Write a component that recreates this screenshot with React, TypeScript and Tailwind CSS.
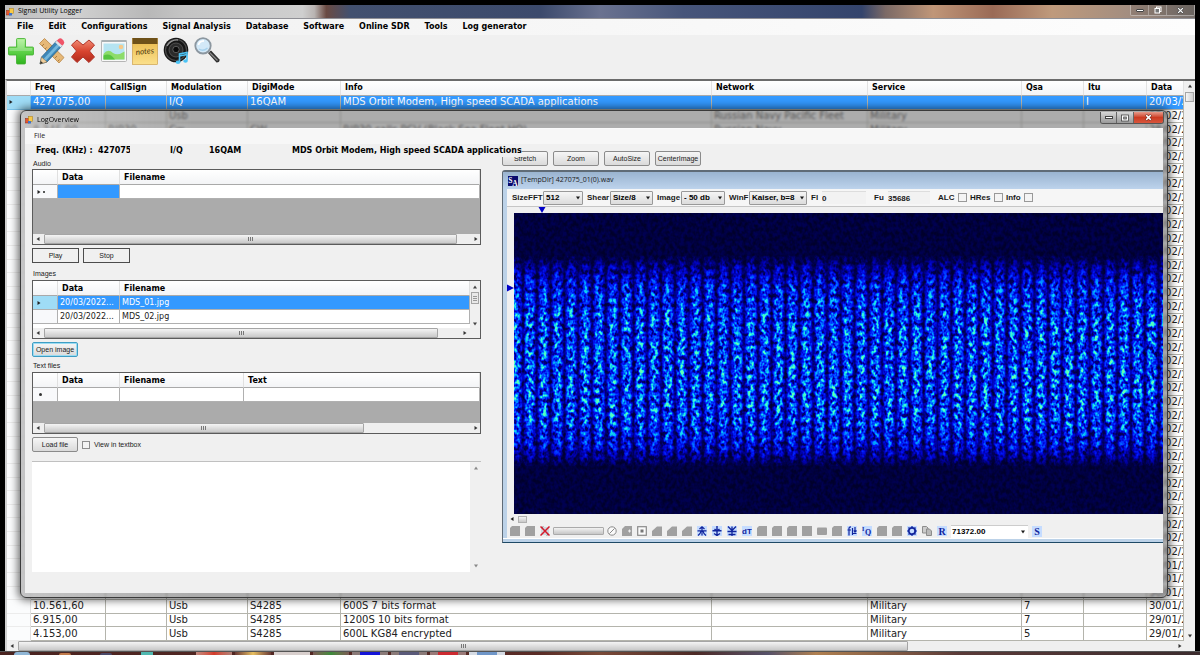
import type { ReactNode } from "react";

const verdana = "font-['DejaVu_Sans',sans-serif]";
const segoe = "font-['Open_Sans',sans-serif]";

type LogRow = {
  freq?: string;
  call?: string;
  mod?: string;
  digi?: string;
  info?: string;
  net?: string;
  service?: string;
  qsa?: string;
  itu?: string;
  data: string;
};

const hiddenRows = (count: number, data: string): LogRow[] =>
  Array.from({ length: count }, () => ({ data }));

const rows: LogRow[] = [
  {
    freq: "427.075,00",
    mod: "I/Q",
    digi: "16QAM",
    info: "MDS Orbit Modem, High speed SCADA applications",
    itu: "I",
    data: "20/03/2022",
  },
  { mod: "Usb", net: "Russian Navy Pacific Fleet", service: "Military", data: "28/02/2022" },
  {
    freq: "8.345,00",
    call: "RJP30",
    mod: "Cw",
    digi: "CW",
    info: "RJP30 calls RCV (Black Sea Fleet HQ)",
    net: "Russian Navy",
    service: "Military",
    data: "28/02/2022",
  },
  ...hiddenRows(31, "28/02/2022"),
  ...hiddenRows(3, "30/01/2022"),
  { freq: "10.561,60", mod: "Usb", digi: "S4285", info: "600S 7 bits format", service: "Military", qsa: "7", data: "30/01/2022" },
  { freq: "6.915,00", mod: "Usb", digi: "S4285", info: "1200S 10 bits format", service: "Military", qsa: "7", data: "29/01/2022" },
  { freq: "4.153,00", mod: "Usb", digi: "S4285", info: "600L KG84 encrypted", service: "Military", qsa: "5", data: "29/01/2022" },
];

const menus = [
  "File",
  "Edit",
  "Configurations",
  "Signal Analysis",
  "Database",
  "Software",
  "Online SDR",
  "Tools",
  "Log generator",
];

function FormIcon() {
  return (
    <svg viewBox="0 0 8 8" className="h-2 w-2 shrink-0" aria-hidden="true">
      <rect x="0.5" y="2.5" width="4" height="4.5" fill="#e8542f" stroke="#8a2a10" strokeWidth="0.5" />
      <rect x="3.5" y="0.5" width="4" height="5" fill="#f7c948" stroke="#a97a10" strokeWidth="0.5" />
      <rect x="3" y="5" width="3" height="2.5" fill="#3f74c9" />
    </svg>
  );
}

function Arrow({ dir, className = "" }: { dir: "left" | "right" | "up" | "down"; className?: string }) {
  const d = {
    left: "M5.5 2 L2.5 4 L5.5 6Z",
    right: "M2.5 2 L5.5 4 L2.5 6Z",
    up: "M2 5.5 L4 2.5 L6 5.5Z",
    down: "M2 2.5 L4 5.5 L6 2.5Z",
  }[dir];
  return (
    <svg viewBox="0 0 8 8" className={`h-2 w-2 shrink-0 ${className}`} aria-hidden="true">
      <path d={d} fill="currentColor" />
    </svg>
  );
}

function HScroll({ thumb, end = "" }: { thumb: string; end?: string }) {
  return (
    <div className={`flex h-[10px] shrink-0 items-center bg-[#efefef] pl-[1px] text-[#333] ${end}`}>
      <Arrow dir="left" />
      <div className="flex h-full min-w-0 flex-1 px-[2px]">
        <div
          className={`flex h-full items-center justify-center gap-px rounded-[1px] border border-[#a5a5a5] bg-linear-to-b from-[#f4f4f4] to-[#c9c9c9] ${thumb}`}
        >
          <i className="h-1 w-px bg-[#777]" />
          <i className="h-1 w-px bg-[#777]" />
          <i className="h-1 w-px bg-[#777]" />
        </div>
      </div>
      <Arrow dir="right" />
    </div>
  );
}

/* ---------- toolbar icons ---------- */

const AddIcon = () => (
  <svg viewBox="0 0 26 28" className="h-7 w-[26px]" aria-hidden="true">
    <defs>
      <linearGradient id="addG" x1="0" y1="0" x2="0" y2="1">
        <stop offset="0" stopColor="#a5f08a" />
        <stop offset="0.5" stopColor="#5fd24a" />
        <stop offset="1" stopColor="#2fb41f" />
      </linearGradient>
    </defs>
    <path
      d="M9.5 1.5h7a1 1 0 0 1 1 1V10h7a1 1 0 0 1 1 1v6a1 1 0 0 1-1 1h-7v8a1 1 0 0 1-1 1h-7a1 1 0 0 1-1-1v-8h-7a1 1 0 0 1-1-1v-6a1 1 0 0 1 1-1h7V2.500a1 1 0 0 1 1-1z"
      fill="url(#addG)"
      stroke="#3fae2c"
      strokeWidth="0.8"
    />
    <path d="M9.500 2.500h7V11h7.500v3H1.500v-3h8z" fill="#fff" opacity="0.25" />
  </svg>
);

const EditIcon = () => (
  <svg viewBox="0 0 26 28" className="h-7 w-[26px]" aria-hidden="true">
    <path d="M0.500 6.500 L5.500 1.500 L25 20.500 L20 26Z" fill="#e6b877" stroke="#b98545" strokeWidth="0.8" />
    <path d="M3 9l2-2M6 12l1.500-1.500M9 15l2-2M16 21l2-2M19 24l1.500-1.500" stroke="#9a6c35" strokeWidth="0.8" />
    <path d="M1 27 L2.500 20 L17.500 4 L23 9 L8 25Z" fill="#3d87b8" stroke="#205a85" strokeWidth="0.7" />
    <path d="M4.500 22 L19.500 6 L21.500 8 L6.500 24Z" fill="#74b7dc" />
    <path d="M1 27 L2.500 20 L8 25Z" fill="#f0cf9c" stroke="#8c6a3b" strokeWidth="0.5" />
    <path d="M1 27l0.700-3 2.300 2z" fill="#333" />
    <path d="M17.500 4 L19.500 2 Q21.500 0.500 23.500 2.500 L24.500 3.500 Q26 5.500 24.800 7 L23 9Z" fill="#ef5468" />
    <path d="M16.200 5.400 L17.800 3.700 L23.300 8.700 L21.700 10.400Z" fill="#dfe4e8" />
  </svg>
);

const DeleteIcon = () => (
  <svg viewBox="0 0 24 28" className="h-7 w-6" aria-hidden="true">
    <defs>
      <linearGradient id="delG" x1="0" y1="0" x2="0" y2="1">
        <stop offset="0" stopColor="#f08a74" />
        <stop offset="0.500" stopColor="#d8442f" />
        <stop offset="1" stopColor="#b02a1c" />
      </linearGradient>
    </defs>
    <path
      d="M6 3 L12 8 L18 3 L23.500 8 L18.500 14 L23.500 20 L18 25.500 L12 20 L6 25.500 L0.500 20 L5.500 14 L0.500 8Z"
      fill="url(#delG)"
      stroke="#b1362a"
      strokeWidth="1"
      strokeLinejoin="round"
    />
  </svg>
);

const PictureIcon = () => (
  <svg viewBox="0 0 26 28" className="h-7 w-[26px]" aria-hidden="true">
    <rect x="0.500" y="3.500" width="25" height="21" rx="1" fill="#f8f8f8" stroke="#b5b5b5" />
    <rect x="0.500" y="3" width="25" height="2" fill="#a9b0b3" />
    <rect x="2.500" y="6.500" width="21" height="16" fill="#b5e4f2" />
    <circle cx="20" cy="10" r="2.300" fill="#f6c98a" />
    <path d="M2.500 17 Q7 11 12 16 Q17 19 23.500 14.500 V22.500 H2.500Z" fill="#8ddc6a" />
    <path d="M2.500 18.500 Q9 15 14 22.500 H2.500Z" fill="#57c440" />
  </svg>
);

const NotesIcon = () => (
  <svg viewBox="0 0 26 28" className="h-7 w-[26px]" aria-hidden="true">
    <defs>
      <linearGradient id="noteG" x1="0" y1="0" x2="0" y2="1">
        <stop offset="0" stopColor="#e9b94a" />
        <stop offset="1" stopColor="#fbe08c" />
      </linearGradient>
    </defs>
    <rect x="0.500" y="1.500" width="25" height="26" fill="url(#noteG)" stroke="#c9973a" strokeWidth="0.600" />
    <rect x="0.500" y="1" width="25" height="6" fill="#6e5119" />
    <text
      x="13"
      y="17"
      fontSize="8"
      fontStyle="italic"
      textAnchor="middle"
      transform="rotate(-6 13 16)"
      fill="#4a3610"
      fontFamily="Lato, sans-serif"
    >
      notes
    </text>
  </svg>
);

const SpeakerIcon = () => (
  <svg viewBox="0 0 26 28" className="h-7 w-[26px]" aria-hidden="true">
    <circle cx="13" cy="13" r="12.300" fill="#161616" />
    <circle cx="13" cy="13" r="10.500" fill="none" stroke="#4b4b4b" strokeWidth="1.200" />
    <circle cx="13" cy="13" r="7" fill="#2b2b2b" stroke="#5c5c5c" strokeWidth="0.800" />
    <circle cx="13" cy="12.500" r="3.200" fill="#0a0a0a" stroke="#777" strokeWidth="0.700" />
    <path d="M4 9 Q8 2.500 15 3" stroke="#9a9a9a" strokeWidth="1.300" fill="none" />
    <path
      d="M16.500 25 V17 L24 15.500 V23.500 M16.500 19 L24 17.500"
      stroke="#4cc3f5"
      strokeWidth="1.600"
      fill="none"
    />
    <ellipse cx="15" cy="25.300" rx="2.300" ry="1.700" fill="#4cc3f5" />
    <ellipse cx="22.500" cy="24" rx="2.300" ry="1.700" fill="#4cc3f5" />
  </svg>
);

const SearchIcon = () => (
  <svg viewBox="0 0 26 28" className="h-7 w-[26px]" aria-hidden="true">
    <path d="M14 16 L17 13.500 L25.500 22.500 Q26 25.500 22.500 25.500Z" fill="#2f2f2f" />
    <path d="M15.500 15.500 L23.500 23.500" stroke="#8b8b8b" strokeWidth="1.200" />
    <circle cx="9" cy="8.800" r="7.700" fill="#d3e9f8" stroke="#8c97a0" strokeWidth="1.800" />
    <path d="M4.500 8 Q5 4 10 3.800" stroke="#fff" strokeWidth="1.800" fill="none" />
    <path d="M5 12 Q9 15 13.500 11" stroke="#a7d2ee" strokeWidth="1.500" fill="none" />
  </svg>
);

const tools: { name: string; icon: ReactNode }[] = [
  { name: "Add", icon: <AddIcon /> },
  { name: "Edit", icon: <EditIcon /> },
  { name: "Delete", icon: <DeleteIcon /> },
  { name: "Image", icon: <PictureIcon /> },
  { name: "Notes", icon: <NotesIcon /> },
  { name: "Audio", icon: <SpeakerIcon /> },
  { name: "Search", icon: <SearchIcon /> },
];

/* ---------- main window ---------- */

function WindowControls() {
  return (
    <div className="flex h-[11px] self-start rounded-b-[2px] border border-t-0 border-white/40 bg-black/10">
      <button aria-label="Minimize" className="flex w-[18px] items-center justify-center border-r border-white/30">
        <i className="h-[3px] w-2 rounded-[1px] border border-[#444] bg-white" />
      </button>
      <button aria-label="Restore" className="flex w-[18px] items-center justify-center border-r border-white/30">
        <svg viewBox="0 0 8 8" className="h-2 w-2" aria-hidden="true">
          <rect x="2.500" y="1" width="4.500" height="4.500" fill="none" stroke="#fff" />
          <rect x="1" y="2.500" width="4.500" height="4.500" fill="#777" stroke="#fff" />
        </svg>
      </button>
      <button aria-label="Close" className="flex w-[27px] items-center justify-center">
        <svg viewBox="0 0 8 8" className="h-[7px] w-[7px]" aria-hidden="true">
          <path d="M1 1L7 7M7 1L1 7" stroke="#444" strokeWidth="2.600" />
          <path d="M1.300 1.300L6.700 6.700M6.700 1.300L1.300 6.700" stroke="#fff" strokeWidth="1.500" />
        </svg>
      </button>
    </div>
  );
}

const headCell =
  "h-[15px] overflow-hidden border-r border-b border-r-[#e2e2e2] border-b-[#a9a9a9] bg-linear-to-b from-white to-[#f3f4f6] p-0 pl-1 text-left text-[8px] leading-[12px] font-bold whitespace-nowrap text-black";

function LogGrid() {
  const heads = ["Freq", "CallSign", "Modulation", "DigiMode", "Info", "Network", "Service", "Qsa", "Itu", "Data"];
  return (
    <div className="flex min-h-0 flex-1 bg-white">
      <table className={`h-full w-full min-w-0 table-fixed border-separate border-spacing-0 ${verdana}`}>
        <colgroup>
          <col className="w-6" />
          <col className="w-[75px]" />
          <col className="w-[61px]" />
          <col className="w-[81px]" />
          <col className="w-[93px]" />
          <col />
          <col className="w-[156px]" />
          <col className="w-[154px]" />
          <col className="w-[62px]" />
          <col className="w-[63px]" />
          <col className="w-[37px]" />
        </colgroup>
        <thead>
          <tr>
            <th className={headCell} aria-label="Row marker" />
            {heads.map((h) => (
              <th key={h} className={headCell}>
                {h}
              </th>
            ))}
          </tr>
        </thead>
        <tbody>
          {rows.map((r, i) => {
            const cells = [r.freq, r.call, r.mod, r.digi, r.info, r.net, r.service, r.qsa, r.itu, r.data];
            const on = i === 0;
            return (
              <tr key={i} className={on ? "bg-[#3399ff] text-white" : "text-[#222]"}>
                <td
                  className={`border-r border-b p-0 ${on ? "border-[#7cc4ea] bg-[#9fdcf6] text-[#222]" : "border-r-[#e0e0e0] border-b-[#ececec] bg-[#fbfcfd]"}`}
                >
                  {on && <Arrow dir="right" />}
                </td>
                {cells.map((c, j) => (
                  <td
                    key={j}
                    className="overflow-hidden border-r border-b border-[#b4b4ac] p-0 pl-[2px] text-[10px] leading-[12px] whitespace-nowrap"
                  >
                    {c}
                  </td>
                ))}
              </tr>
            );
          })}
        </tbody>
      </table>
      <div className="flex w-[11px] shrink-0 flex-col items-center bg-[#f0f0f0] py-[1px] text-[#333]">
        <Arrow dir="up" />
        <i className="mt-[2px] h-[10px] w-[9px] border border-[#a5a5a5] bg-linear-to-r from-[#f6f6f6] to-[#cfcfcf]" />
        <div className="flex-1" />
        <Arrow dir="down" />
      </div>
    </div>
  );
}

/* ---------- dialog, left side ---------- */

const subHead =
  "h-[15px] border-r border-b border-r-[#e0e0e0] border-b-[#a9a9a9] bg-linear-to-b from-white to-[#f3f4f6] p-0 pl-1 text-left text-[8px] leading-[13px] font-bold whitespace-nowrap text-black";
const subCell = "h-[14px] border-r border-b border-[#b0b0b0] p-0 pl-[2px] text-[8px] leading-[12px] whitespace-nowrap";
const btnBase =
  "h-[15px] rounded-[2px] border bg-linear-to-b from-[#f6f6f6] to-[#dadada] text-center text-[7px] leading-[12px] text-[#1a1a1a]";
const btn = `${btnBase} border-[#8b8b8b]`;
const btnFocused = `${btnBase} border-[#3f9ec4] shadow-[inset_0_0_0_1px_#9bdcf3]`;
const gridFrame = "flex flex-col border border-[#5b5b5b]";

function AudioGrid() {
  return (
    <div className={`h-[76px] bg-[#ababab] ${gridFrame}`}>
      <table className={`w-full table-fixed border-separate border-spacing-0 bg-white ${verdana}`}>
        <colgroup>
          <col className="w-[25px]" />
          <col className="w-[62px]" />
          <col />
        </colgroup>
        <thead>
          <tr>
            <th className={subHead} aria-label="Row marker" />
            <th className={subHead}>Data</th>
            <th className={subHead}>Filename</th>
          </tr>
        </thead>
        <tbody>
          <tr>
            <td className={`${subCell} bg-[#f8f9fb]`}>
              <span className="flex items-center text-[#222]">
                <Arrow dir="right" />
                <i className="h-[2px] w-[2px] rounded-full bg-[#222]" />
              </span>
            </td>
            <td className={`${subCell} bg-[#3399ff]`} />
            <td className={subCell} />
          </tr>
        </tbody>
      </table>
      <div className="flex-1" />
      <HScroll thumb="w-[97%]" />
    </div>
  );
}

function ImagesGrid() {
  return (
    <div className={`h-[59px] bg-white ${gridFrame}`}>
      <div className="flex min-h-0 flex-1">
        <table className={`w-full table-fixed self-start border-separate border-spacing-0 ${verdana}`}>
          <colgroup>
            <col className="w-[25px]" />
            <col className="w-[62px]" />
            <col />
          </colgroup>
          <thead>
            <tr>
              <th className={subHead} aria-label="Row marker" />
              <th className={subHead}>Data</th>
              <th className={subHead}>Filename</th>
            </tr>
          </thead>
          <tbody>
            <tr className="bg-[#3399ff] text-white">
              <td className={`${subCell} border-[#7cc4ea] bg-[#9fdcf6] pl-0 text-[#222]`}>
                <Arrow dir="right" />
              </td>
              <td className={subCell}>20/03/2022...</td>
              <td className={subCell}>MDS_01.jpg</td>
            </tr>
            <tr className="text-[#1a1a1a]">
              <td className={`${subCell} bg-[#f8f9fb]`} />
              <td className={subCell}>20/03/2022...</td>
              <td className={subCell}>MDS_02.jpg</td>
            </tr>
          </tbody>
        </table>
        <div className="flex w-[10px] shrink-0 flex-col items-center bg-[#f0f0f0] text-[#444]">
          <Arrow dir="up" className="mt-[2px]" />
          <i className="mt-[1px] flex h-3 w-2 flex-col items-center justify-center gap-px border border-[#a5a5a5] bg-[#e9e9e9]">
            <b className="h-px w-1 bg-[#999]" />
            <b className="h-px w-1 bg-[#999]" />
            <b className="h-px w-1 bg-[#999]" />
          </i>
          <div className="flex-1" />
          <Arrow dir="down" />
        </div>
      </div>
      <HScroll thumb="w-[95%]" end="pr-[11px]" />
    </div>
  );
}

function TextGrid() {
  return (
    <div className={`h-[62px] bg-[#ababab] ${gridFrame}`}>
      <table className={`w-full table-fixed border-separate border-spacing-0 bg-white ${verdana}`}>
        <colgroup>
          <col className="w-[25px]" />
          <col className="w-[62px]" />
          <col className="w-[124px]" />
          <col />
        </colgroup>
        <thead>
          <tr>
            <th className={subHead} aria-label="Row marker" />
            <th className={subHead}>Data</th>
            <th className={subHead}>Filename</th>
            <th className={subHead}>Text</th>
          </tr>
        </thead>
        <tbody>
          <tr>
            <td className={`${subCell} bg-[#f8f9fb]`}>
              <i className="ml-1 block h-[3px] w-[3px] rounded-full bg-[#333]" />
            </td>
            <td className={subCell} />
            <td className={subCell} />
            <td className={subCell} />
          </tr>
        </tbody>
      </table>
      <div className="flex-1" />
      <HScroll thumb="w-3/4" />
    </div>
  );
}

function FilesPane() {
  return (
    <div className="flex flex-col text-[7px] leading-[10px] text-[#1a1a1a]">
      <div className={`flex h-[14px] items-center text-[8px] leading-[12px] font-bold text-black ${verdana}`}>
        <span className="w-[62px] shrink-0 pl-1 whitespace-nowrap">Freq. (KHz) :</span>
        <span className="mr-10 ml-1 w-8 shrink-0 overflow-hidden">427075</span>
        <span className="w-[39px] shrink-0">I/Q</span>
        <span className="w-[83px] shrink-0">16QAM</span>
        <span className="relative z-10 bg-[#f0f0f0] whitespace-nowrap">MDS Orbit Modem, High speed SCADA applications</span>
      </div>
      <span className="mt-[1px] pl-[1px]">Audio</span>
      <AudioGrid />
      <div className="mt-[3px] flex gap-1">
        <button className="h-[15px] w-[47px] border border-[#4c4c4c] text-center">Play</button>
        <button className="h-[15px] w-[47px] border border-[#4c4c4c] text-center">Stop</button>
      </div>
      <span className="mt-[6px] mb-[1px] pl-[1px]">Images</span>
      <ImagesGrid />
      <button className={`${btnFocused} mt-[3px] w-[46px]`}>Open image</button>
      <span className="mt-1 mb-[1px] pl-[1px]">Text files</span>
      <TextGrid />
      <div className="mt-[3px] flex items-center">
        <button className={`${btn} w-[46px]`}>Load file</button>
        <label className="ml-1 flex items-center gap-1">
          <input type="checkbox" className="h-2 w-2 appearance-none border border-[#8f8f8f] bg-[#f4f4f4]" />
          View in textbox
        </label>
      </div>
      <div className="mt-[9px] flex h-[111px] border-t border-[#c0c0c0] bg-white">
        <textarea aria-label="Text file content" className="min-w-0 flex-1 resize-none outline-none" />
        <div className="flex w-[11px] flex-col items-center justify-between bg-[#f0f0f0] py-[2px] text-[#888]">
          <Arrow dir="up" />
          <Arrow dir="down" />
        </div>
      </div>
    </div>
  );
}

/* ---------- dialog, analyser ---------- */

function Combo({ label, value, lw, sw }: { label: string; value: string; lw: string; sw: string }) {
  return (
    <label className="flex items-center">
      <span className={`whitespace-nowrap ${lw}`}>{label}</span>
      <span className={`relative mr-1 ${sw}`}>
        <select
          defaultValue={value}
          className="block h-[14px] w-full appearance-none rounded-[1px] border border-[#999] bg-linear-to-b from-[#f5f5f5] to-[#dcdcdc] pl-[2px] text-[8px] leading-[11px] font-bold text-black"
        >
          <option>{value}</option>
        </select>
        <Arrow dir="down" className="pointer-events-none absolute top-[3px] right-px" />
      </span>
    </label>
  );
}

function Tick({ label, lw }: { label: string; lw: string }) {
  return (
    <label className="flex items-center pr-[3px]">
      <span className={lw}>{label}</span>
      <input type="checkbox" className="h-[9px] w-[9px] appearance-none border border-[#999] bg-[#f4f4f4]" />
    </label>
  );
}

const STRIPES = Array.from({ length: 48 }, (_, i) => 2 + i * 13.82);

function Spectrogram() {
  return (
    <svg
      viewBox="0 0 649 301"
      preserveAspectRatio="none"
      className="block h-[301px] w-full bg-[#000038]"
      role="img"
      aria-label="Spectrogram"
    >
      <defs>
        <linearGradient id="band" x1="0" y1="0" x2="0" y2="1">
          <stop offset="0" stopColor="#fff" stopOpacity="0" />
          <stop offset="0.060" stopColor="#fff" stopOpacity="0.350" />
          <stop offset="0.150" stopColor="#fff" stopOpacity="0.750" />
          <stop offset="0.300" stopColor="#fff" stopOpacity="0.950" />
          <stop offset="0.600" stopColor="#fff" stopOpacity="1" />
          <stop offset="0.780" stopColor="#fff" stopOpacity="0.950" />
          <stop offset="0.900" stopColor="#fff" stopOpacity="0.650" />
          <stop offset="0.950" stopColor="#fff" stopOpacity="0.350" />
          <stop offset="1" stopColor="#fff" stopOpacity="0" />
        </linearGradient>
        <filter id="soft" x="0" y="0" width="1" height="1">
          <feGaussianBlur stdDeviation="1.400 0.600" />
        </filter>
        <filter
          id="heat"
          filterUnits="userSpaceOnUse"
          x="0"
          y="0"
          width="649"
          height="301"
          colorInterpolationFilters="sRGB"
        >
          <feTurbulence type="fractalNoise" baseFrequency="0.270 0.210" numOctaves="2" seed="7" />
          <feColorMatrix values="2.400 0 0 0 -0.700  2.400 0 0 0 -0.700  2.400 0 0 0 -0.700  0 0 0 0 1" result="grain" />
          <feComposite in="SourceGraphic" in2="grain" operator="arithmetic" k1="0.800" k2="0.140" k3="0.080" k4="0" />
          <feComponentTransfer>
            <feFuncR type="table" tableValues="0 0 0 0 0 0 0 0 0.050 0.200 0.400" />
            <feFuncG type="table" tableValues="0 0 0 0.020 0.080 0.220 0.400 0.600 0.800 0.950 1" />
            <feFuncB type="table" tableValues="0.170 0.360 0.620 0.800 0.950 1 1 1 0.950 0.850 0.700" />
          </feComponentTransfer>
        </filter>
      </defs>
      <g filter="url(#heat)">
        <rect width="649" height="301" fill="#000" />
        <g filter="url(#soft)">
          <rect width="649" height="301" fill="#000" />
          {STRIPES.map((x) => (
            <rect key={x} x={x - 4} y="42" width="8" height="212" fill="url(#band)" />
          ))}
        </g>
      </g>
    </svg>
  );
}

type Glyph = "doc" | "flag" | "box" | "step" | "small" | "target" | "no" | "x" | "up" | "mid" | "down" | "dT" | "fd" | "iq" | "gear" | "copy" | "R";

function ToolGlyph({ kind }: { kind: Glyph }) {
  const blue = "#10249c";
  const halo = <rect x="0" y="0" width="10" height="10" fill="#c5dcff" />;
  const body: Record<Glyph, ReactNode> = {
    doc: <path d="M0 2 L2 0 H10 V10 H0Z" fill="#a0a0a0" />,
    flag: (
      <>
        <path d="M0 3 L3 0 H10 V10 H0Z" fill="#a0a0a0" />
        <path d="M6 5h3M7.500 3.500v3" stroke="#eee" />
      </>
    ),
    box: <rect width="10" height="10" fill="#a0a0a0" />,
    step: <path d="M0 10 V5 L5 0.500 H10 V10Z" fill="#a0a0a0" />,
    small: <rect x="0" y="1.500" width="10" height="7.500" rx="1" fill="#a0a0a0" />,
    target: (
      <>
        <rect x="0.700" y="0.700" width="8.600" height="8.600" fill="#fafafa" stroke="#8a8a8a" strokeWidth="1.200" />
        <rect x="3.500" y="3.500" width="3" height="3" fill="#777" />
      </>
    ),
    no: (
      <>
        <circle cx="5" cy="5" r="4.200" fill="#fafafa" stroke="#8a8a8a" />
        <path d="M2.500 7.500L7.500 2.500" stroke="#8a8a8a" />
      </>
    ),
    x: (
      <>
        <path d="M1 1h8v8H1z" fill="#cfd8df" />
        <path d="M1.500 2L3 0.500M8.500 8L7 9.500" stroke="#333" />
        <path d="M0.500 0.500L9.500 9.500M9.500 0.500L0.500 9.500" stroke="#d51a2b" strokeWidth="1.500" />
      </>
    ),
    up: (
      <>
        {halo}
        <path d="M2.500 3 L5 0.800 L7.500 3M0.500 4.800H9.500M5 1.500V9.500M1 9.500 Q3.500 8 4 5M9 9.500 Q6.500 8 6 5" stroke={blue} strokeWidth="1.200" fill="none" />
      </>
    ),
    mid: (
      <>
        {halo}
        <path d="M5 0V10M0.500 4.800h9M2.500 3L5 5L7.500 3M2 7.500 L5 9.500 L8 7.500" stroke={blue} strokeWidth="1.400" fill="none" />
      </>
    ),
    down: (
      <>
        {halo}
        <path d="M5 3V10M0.500 5.500h9M1 0.500L5 4.500L9 0.500M5 0.500V3M1.500 8.500h7" stroke={blue} strokeWidth="1.300" fill="none" />
      </>
    ),
    dT: (
      <>
        {halo}
        <text x="5" y="8" fontSize="8" fontWeight="700" textAnchor="middle" fill={blue}>dT</text>
      </>
    ),
    fd: (
      <>
        {halo}
        <path d="M2 9.500V2Q2 0.800 4 0.800M0.500 4H4M5.500 9V2M5.500 7.500H9.500M8 1V6M6.800 4.500L8 6L9.500 4.500" stroke={blue} strokeWidth="1.200" fill="none" />
      </>
    ),
    iq: (
      <>
        {halo}
        <text x="0" y="5" fontSize="6" fontWeight="700" fill={blue} fontFamily="Liberation Serif, serif">I</text>
        <text x="3" y="9" fontSize="8" fill={blue} fontFamily="Liberation Serif, serif">Q</text>
      </>
    ),
    gear: (
      <>
        {halo}
        <circle cx="5" cy="5" r="3.200" fill="none" stroke={blue} strokeWidth="1.800" />
        <path d="M5 0v2M5 8v2M0 5h2M8 5h2M1.500 1.500L3 3M8.500 8.500L7 7M8.500 1.500L7 3M1.500 8.500L3 7" stroke={blue} strokeWidth="1.200" />
      </>
    ),
    copy: (
      <>
        <path d="M0.500 0.500h4l1.500 1.500v5h-5.500z" fill="#ccc" stroke="#8c8c8c" />
        <path d="M4.500 3h3l2 2v4.500h-5z" fill="#b9b9b9" stroke="#8c8c8c" />
      </>
    ),
    R: (
      <>
        {halo}
        <text x="5" y="8.500" fontSize="10" fontWeight="700" textAnchor="middle" fill={blue} fontFamily="Liberation Serif, serif">R</text>
      </>
    ),
  };
  return (
    <button className="flex w-[15px] shrink-0 justify-center" aria-label={`Tool ${kind}`}>
      <svg viewBox="0 0 10 10" className="h-[10px] w-[10px]" aria-hidden="true">
        {body[kind]}
      </svg>
    </button>
  );
}

const barLeft: Glyph[] = ["doc", "doc", "x"];
const barRight: Glyph[] = [
  "no", "flag", "target", "step", "step", "step", "up", "mid", "down", "dT", "doc",
  "doc", "doc", "box", "small", "doc", "fd", "iq", "doc", "doc", "gear", "copy", "R",
];

function Analyser() {
  return (
    <section className="mt-1 flex flex-col overflow-hidden rounded-tl-[3px] border border-r-0 border-t-2 border-[#5f6b76] border-b-[#1e4a66] bg-[#bcd2e8] text-[8px] font-bold text-[#1a1a1a]">
      <header
        className={`flex h-[17px] items-center gap-[3px] bg-linear-to-b from-[#9ab4d0] to-[#bdd3ec] pl-[5px] text-[7px] font-normal ${segoe}`}
      >
        <svg viewBox="0 0 10 10" className="h-[10px] w-[10px]" aria-hidden="true">
          <rect width="10" height="10" fill="#0b0b6e" />
          <text x="0.300" y="6.500" fontSize="7.500" fontWeight="700" fill="#fff" fontFamily="Liberation Serif, serif">S</text>
          <text x="4.300" y="9.500" fontSize="7.500" fontWeight="700" fill="#fff" fontFamily="Liberation Serif, serif">A</text>
        </svg>
        [TempDir] 427075_01(0).wav
      </header>
      <div className="ml-1 flex flex-col bg-[#f0f0f0]">
        <div className="flex h-[18px] items-center border-b border-[#c6c6c6] bg-[#f6f6f6] pl-[5px]">
          <Combo label="SizeFFT" value="512" lw="w-[31px]" sw="w-10" />
          <Combo label="Shear" value="Size/8" lw="w-[23px]" sw="w-[43px]" />
          <Combo label="Image" value="- 50 db" lw="w-6" sw="w-11" />
          <Combo label="WinF" value="Kaiser, b=8" lw="w-5" sw="w-[58px]" />
          <label className="flex items-center">
            <span className="w-[11px]">Fl</span>
            <input defaultValue="0" className="mr-2 h-[13px] w-[44px] border-t border-[#ddd] bg-[#f2f2f2] outline-none" />
          </label>
          <label className="flex items-center">
            <span className="w-[14px]">Fu</span>
            <input defaultValue="35686" className="mr-2 h-[13px] w-[42px] border-t border-[#ddd] bg-[#f2f2f2] outline-none" />
          </label>
          <Tick label="ALC" lw="w-5" />
          <Tick label="HRes" lw="w-6" />
          <Tick label="Info" lw="w-[18px]" />
        </div>
        <div className="h-[6px] pl-[31px]">
          <svg viewBox="0 0 8 6" className="h-[6px] w-2" aria-hidden="true">
            <path d="M0.500 0H7.500L4 6Z" fill="#0000c8" />
          </svg>
        </div>
        <div className="flex">
          <svg viewBox="0 0 7 301" className="h-[301px] w-[7px] shrink-0" aria-hidden="true">
            <path d="M0 71.500 L7 75 L0 78.500Z" fill="#0000c8" />
          </svg>
          <div className="min-w-0 flex-1">
            <Spectrogram />
          </div>
        </div>
        <div className="flex h-[10px] items-center gap-[2px]">
          <Arrow dir="left" className="ml-[1px]" />
          <i className="h-[7px] w-[9px] border border-[#b0b0b0] bg-linear-to-b from-[#f4f4f4] to-[#c9c9c9]" />
        </div>
        <div className="flex h-[14px] items-center">
          {barLeft.map((g, i) => (
            <ToolGlyph key={i} kind={g} />
          ))}
          <i className="ml-px h-2 w-[51px] shrink-0 rounded-[1px] border border-[#aaa] bg-linear-to-b from-[#f2f2f2] to-[#c6c6c6]" />
          {barRight.map((g, i) => (
            <ToolGlyph key={i} kind={g} />
          ))}
          <span className="relative ml-[2px] w-[77px] shrink-0">
            <select
              aria-label="Sample rate"
              className="block h-[13px] w-full appearance-none border-t border-[#ccc] bg-white pl-[1px] text-[8px] leading-[11px] font-bold text-black"
            >
              <option>71372.00</option>
            </select>
            <Arrow dir="down" className="pointer-events-none absolute top-[3px] right-px" />
          </span>
          <button className="ml-1 h-[11px] w-[10px] bg-[#c5dcff] text-center font-['Liberation_Serif',serif] text-[10px] leading-[11px] font-bold text-[#10249c]">
            S
          </button>
        </div>
      </div>
      <div className="h-1 border-t border-white" />
    </section>
  );
}

function LogOverview() {
  return (
    <section className="absolute top-[110px] right-[32px] bottom-[57px] left-[20px] flex flex-col rounded-md border border-[#3a3a3a] bg-[#747474]/60 bg-linear-to-r from-white/30 via-transparent via-15% to-transparent px-1 pb-1 shadow-[0_0_9px_2px_rgba(0,0,0,0.600)] backdrop-blur-[1px]">
      <header className={`flex h-[17px] shrink-0 items-center gap-[4px] pt-px text-[7px] text-black ${segoe}`}>
        <FormIcon />
        <span className="flex-1">LogOverview</span>
        <div className="mr-[-1px] flex h-3 self-start overflow-hidden rounded-b-[3px] border border-t-0 border-[#555]">
          <button aria-label="Minimize" className="flex w-4 items-center justify-center border-r border-[#666] bg-linear-to-b from-[#d6d6d6] to-[#9a9a9a]">
            <i className="h-[3px] w-2 border border-[#444] bg-white" />
          </button>
          <button aria-label="Maximize" className="flex w-[17px] items-center justify-center border-r border-[#666] bg-linear-to-b from-[#d6d6d6] to-[#9a9a9a]">
            <svg viewBox="0 0 8 8" className="h-2 w-2" aria-hidden="true">
              <rect x="0.500" y="1" width="7" height="6" fill="#fff" stroke="#444" strokeWidth="0.800" />
              <rect x="2.700" y="3" width="2.600" height="2" fill="#bbb" stroke="#444" strokeWidth="0.800" />
            </svg>
          </button>
          <button aria-label="Close" className="flex w-[29px] items-center justify-center bg-linear-to-b from-[#e59a8b] via-[#cc3b22] to-[#d8553c]">
            <svg viewBox="0 0 8 8" className="h-[7px] w-[7px]" aria-hidden="true">
              <path d="M1 1L7 7M7 1L1 7" stroke="#5a1a10" strokeWidth="2.800" />
              <path d="M1.300 1.300L6.700 6.700M6.700 1.300L1.300 6.700" stroke="#fff" strokeWidth="1.700" />
            </svg>
          </button>
        </div>
      </header>
      <div className="flex min-h-0 flex-1 flex-col border-t border-[#fafafa] bg-[#f0f0f0] font-['Liberation_Sans',sans-serif]">
        <nav className="flex h-[15px] shrink-0 items-center bg-[#f7f7f7] pl-[9px]">
          <button className={`text-[7px] text-[#222] ${segoe}`}>File</button>
        </nav>
        <div className="grid min-h-0 flex-1 grid-cols-[449px_1fr] gap-x-[21px] overflow-hidden pl-[7px]">
          <FilesPane />
          <div className="flex min-w-0 flex-col pt-[7px]">
            <div className="flex gap-1">
              <button className={`${btn} w-[46px]`}>Stretch</button>
              <button className={`${btn} ml-px w-[46px]`}>Zoom</button>
              <button className={`${btn} ml-px w-[46px]`}>AutoSize</button>
              <button className={`${btn} ml-px w-[46px]`}>CenterImage</button>
            </div>
            <Analyser />
          </div>
        </div>
      </div>
    </section>
  );
}

export default function App() {
  return (
    <div className="relative flex h-screen flex-col overflow-hidden bg-black px-[5px] pt-[5px]">
      <main className="flex min-h-0 flex-1 flex-col bg-[#f0f0f0]">
        <header
          className={`flex h-[14px] shrink-0 items-center gap-[4px] border-b border-[#8f8f95] bg-[linear-gradient(90deg,#bdbdbd_0%,#d0d0d0_6%,#b8b8b8_12%,#c4c4c4_15%,#cfcfcf_25%,#b9b4b2_26%,#6a4a42_27%,#42506f_29%,#3c4a6c_45%,#6a7290_50%,#47557a_57%,#34446c_72%,#7c6a66_74%,#c09678_78%,#9a6a56_83%,#bf9a7c_88%,#a08c80_95%,#77706c_100%)] pl-px text-[7px] text-black ${segoe}`}
        >
          <FormIcon />
          <span className="flex-1">Signal Utility Logger</span>
          <WindowControls />
        </header>
        <nav
          className={`flex h-4 shrink-0 items-center gap-[15px] bg-linear-to-r from-[#f1f1f1] to-[#fdfdfd] pl-3 text-[8px] leading-[12px] font-bold text-black ${verdana}`}
        >
          {menus.map((m) => (
            <button key={m} className="whitespace-nowrap">
              {m}
            </button>
          ))}
        </nav>
        <div className="flex h-[44px] shrink-0 items-start gap-[5px] pt-[2px] pl-[3px]">
          {tools.map((t) => (
            <button key={t.name} aria-label={t.name} className="flex h-7 w-[26px] items-center justify-center">
              {t.icon}
            </button>
          ))}
        </div>
        <div className="flex min-h-0 flex-1 flex-col border-t-2 border-l-2 border-t-[#6b6b6b] border-l-[#d0d0d0]">
          <LogGrid />
          <HScroll thumb="w-[77%]" end="pr-[11px]" />
        </div>
      </main>
      <footer className="mx-[-5px] flex h-[4px] shrink-0 items-end gap-[3px] border-t border-[#555] bg-[linear-gradient(90deg,#4a2320_0%,#5a2c26_45%,#7a4a38_50%,#4d2a26_58%,#57526a_64%,#b08050_68%,#5a3a38_80%,#3c2c2e_100%)] pl-[14px]">
        <i className="mr-[26px] h-[3px] w-4 rounded-t-full bg-[#8fb6d6]" />
        <i className="mr-[26px] h-[2px] w-3 rounded-t-full bg-[#c07a4a]" />
        <i className="mr-[26px] h-[2px] w-3 rounded-t-full bg-[#4a4a6a]" />
        <i className="mr-[40px] h-[3px] w-3 bg-[#4fb8b0]" />
        <i className="h-[3px] w-9 bg-linear-to-r from-[#c08a80] via-[#d43a2a] to-[#b08078]" />
        <i className="h-[3px] w-9 bg-linear-to-r from-[#6a3a34] via-[#e8c060] to-[#6a3a34]" />
        <i className="h-[3px] w-9 bg-[#d8cfcd]" />
        <i className="h-[3px] w-9 bg-linear-to-r from-[#7a5a54] via-[#3a8a3a] to-[#7a5a54]" />
        <i className="h-[3px] w-9 border-x-[8px] border-[#8a7a78] bg-[#1414d8]" />
        <i className="h-[3px] w-9 border-x-[8px] border-[#8a7a78] bg-[#5a5a7a]" />
        <i className="h-[3px] w-9 border-x-[8px] border-[#9a7a78] bg-[#cc2a30]" />
        <i className="h-[3px] w-9 border-x-[8px] border-[#d5dbe4] bg-[#6f96c8]" />
      </footer>
      <LogOverview />
    </div>
  );
}
